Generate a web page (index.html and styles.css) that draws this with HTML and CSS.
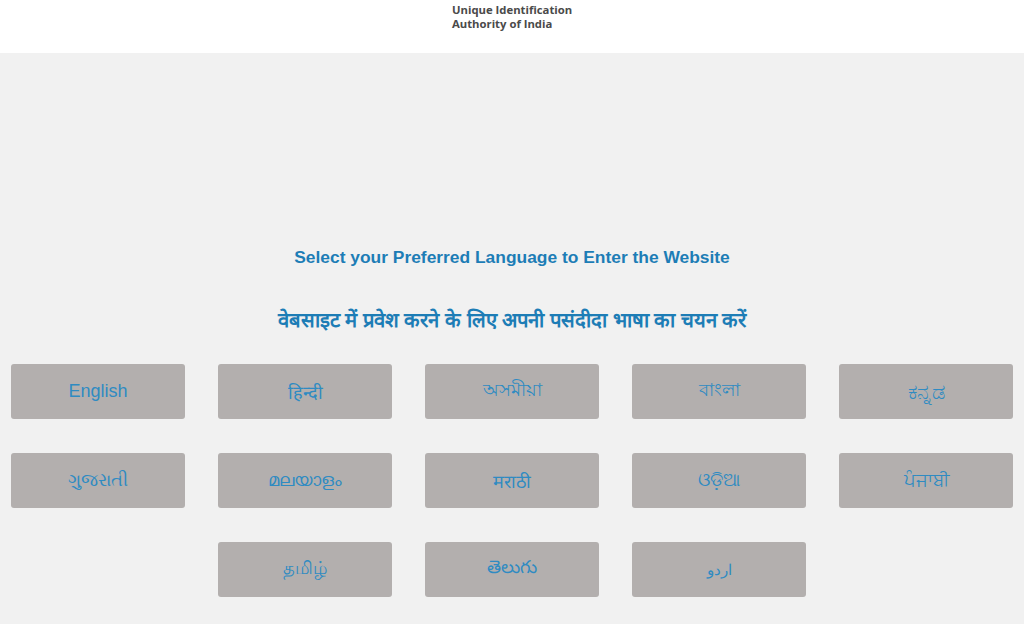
FILE: index.html
```html
<!DOCTYPE html>
<html lang="en">
<head>
<meta charset="utf-8">
<title>Unique Identification Authority of India</title>
<link rel="stylesheet" href="styles.css">
</head>
<body>
<header class="site-header">
  <div class="brand">
    <span class="brand-line">Unique Identification</span>
    <span class="brand-line">Authority of India</span>
  </div>
</header>
<main class="lang-page">
  <h1 class="title-en">Select your Preferred Language to Enter the Website</h1>
  <h2 class="title-hi">वेबसाइट में प्रवेश करने के लिए अपनी पसंदीदा भाषा का चयन करें</h2>
  <div class="lang-grid">
    <a class="lang-btn" href="#">English</a>
    <a class="lang-btn" href="#">हिन्दी</a>
    <a class="lang-btn" href="#">অসমীয়া</a>
    <a class="lang-btn" href="#">বাংলা</a>
    <a class="lang-btn lang-kn" href="#">ಕನ್ನಡ</a>
    <a class="lang-btn" href="#">ગુજરાતી</a>
    <a class="lang-btn" href="#">മലയാളം</a>
    <a class="lang-btn" href="#">मराठी</a>
    <a class="lang-btn" href="#">ଓଡ଼ିଆ</a>
    <a class="lang-btn" href="#">ਪੰਜਾਬੀ</a>
    <a class="lang-btn lang-start2" href="#">தமிழ்</a>
    <a class="lang-btn" href="#">తెలుగు</a>
    <a class="lang-btn lang-urdu" href="#">اردو</a>
  </div>
</main>
</body>
</html>
```

FILE: styles.css
```css
html, body {
  margin: 0;
  padding: 0;
}
body {
  background: #f1f1f1;
  font-family: "Liberation Sans", Arial, sans-serif;
  height: 624px;
  overflow: hidden;
}
.site-header {
  background: #ffffff;
  height: 53px;
  box-sizing: border-box;
  padding: 3px 0 0 452px;
}
.brand {
  display: flex;
  flex-direction: column;
  font-family: "Open Sans", "Noto Sans", sans-serif;
  font-weight: 700;
  font-size: 11.3px;
  line-height: 14px;
  color: #4a4a4a;
}
.lang-page {
  padding-top: 194px;
}
.title-en {
  margin: 0;
  text-align: center;
  font-size: 17.4px;
  line-height: 20px;
  font-weight: 700;
  color: #1d7db6;
}
.title-hi {
  margin: 39px 0 0;
  text-align: center;
  font-size: 20.2px;
  line-height: 28px;
  font-weight: 700;
  color: #1d7db6;
}
.lang-grid {
  display: grid;
  grid-template-columns: repeat(5, 174px);
  grid-auto-rows: 55px;
  column-gap: 33px;
  row-gap: 34px;
  justify-content: center;
  margin-top: 30px;
}
.lang-btn {
  display: flex;
  align-items: center;
  justify-content: center;
  background: #b3afae;
  border-radius: 3px;
  color: #2f8bc2;
  font-size: 18px;
  text-decoration: none;
  box-sizing: border-box;
}
.lang-kn {
  font-size: 21px;
}
.lang-start2 {
  grid-column-start: 2;
}
.lang-urdu {
  font-size: 15px;
}
```
